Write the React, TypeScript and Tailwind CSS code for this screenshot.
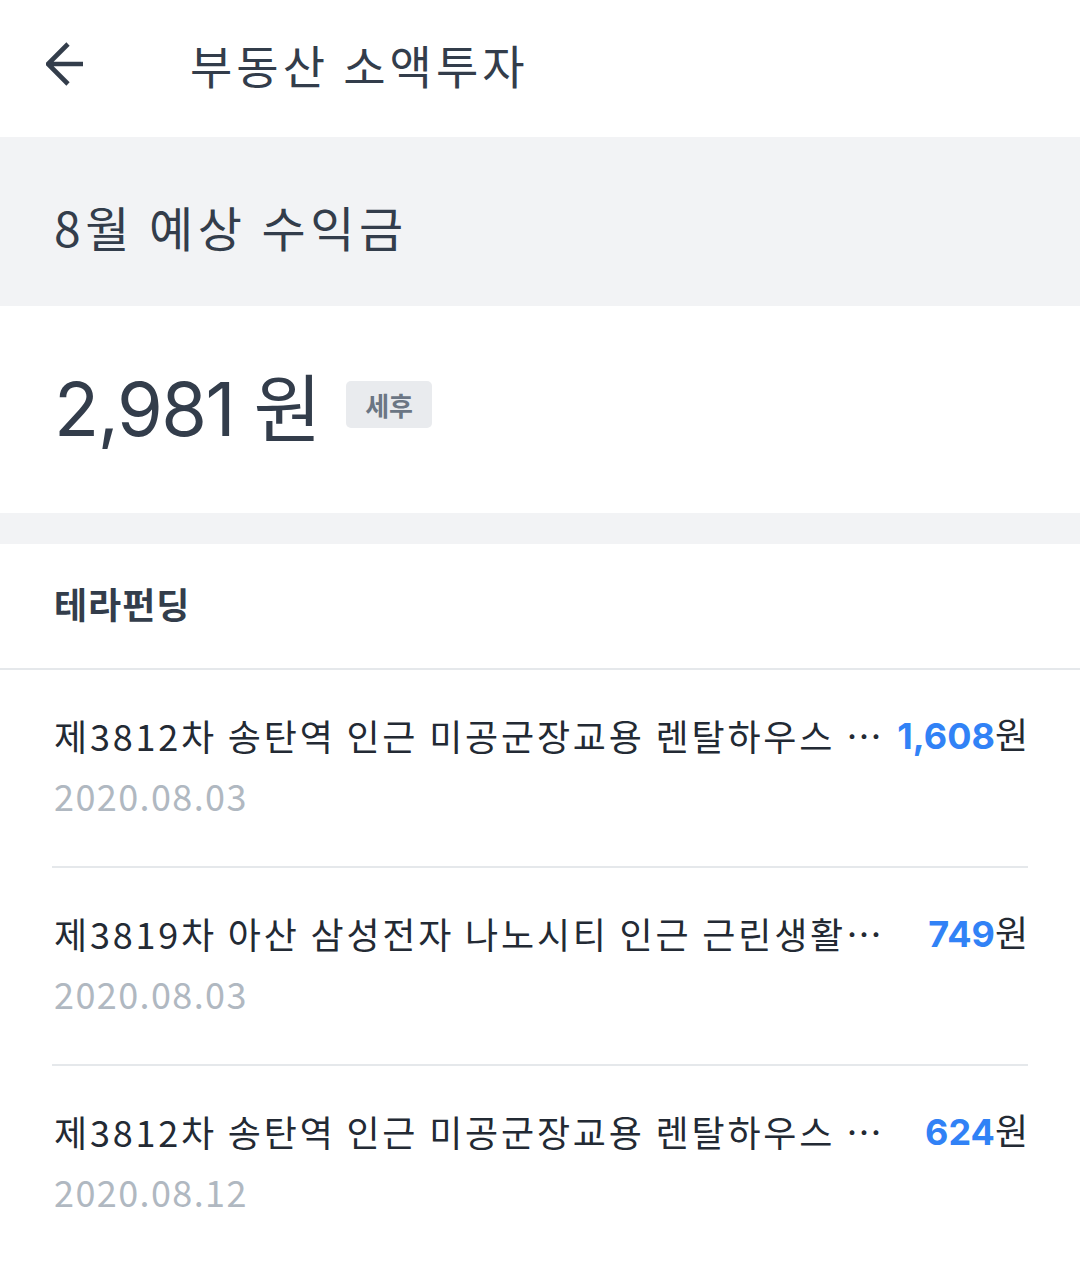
import React from "react";

const rows = [
  { title: "제3812차 송탄역 인근 미공군장교용 렌탈하우스 …", amount: "1,608", date: "2020.08.03" },
  { title: "제3819차 아산 삼성전자 나노시티 인근 근린생활…", amount: "749", date: "2020.08.03" },
  { title: "제3812차 송탄역 인근 미공군장교용 렌탈하우스 …", amount: "624", date: "2020.08.12" },
];

const kr = { fontFamily: "'Noto Sans CJK KR', sans-serif" };

export default function App() {
  return (
    <div
      className="w-[1080px] min-h-[1280px] bg-white text-[#333d4b]"
      style={{ fontFamily: "Inter, 'Noto Sans CJK KR', sans-serif" }}
    >
      {/* Header */}
      <div className="h-[137px] flex items-center pb-[10px]">
        <div className="w-[190px] pl-[46px] flex items-center">
          <svg width="42" height="46" viewBox="0 0 42 46" fill="none">
            <path d="M22 3 L2 23 L22 43 M2 23 H37" stroke="#333d4b" strokeWidth="4.6" strokeLinejoin="miter" />
          </svg>
        </div>
        <div className="text-[46px] leading-[56px] tracking-[4px]" style={kr}>
          부동산 소액투자
        </div>
      </div>

      {/* Month band */}
      <div className="h-[169px] bg-[#f2f3f5] pl-[54px] pt-[61px]">
        <div className="text-[48px] leading-[56px] tracking-[4.5px]" style={kr}>
          8월 예상 수익금
        </div>
      </div>

      {/* Amount */}
      <div className="h-[207px] flex items-center pl-[54px] pb-[6px]">
        <div className="text-[74px] leading-[90px] font-normal tracking-[-1.5px]">
          2,981 <span style={kr}>원</span>
        </div>
        <div
          className="ml-[26px] mt-[-4px] w-[86px] h-[47px] rounded-[5px] bg-[#e9ebee] flex items-center justify-center text-[26px] font-bold text-[#6b7684]"
          style={kr}
        >
          세후
        </div>
      </div>

      <div className="h-[31px] bg-[#f2f3f5]" />

      {/* Section title */}
      <div className="pl-[54px] pt-[35px] pb-[41px] border-b-[2px] border-[#e5e8eb]">
        <div className="text-[36px] leading-[48px] font-bold text-[#333d4b] tracking-[1px]" style={kr}>
          테라펀딩
        </div>
      </div>

      {/* List */}
      <div className="px-[52px]">
        {rows.map((r, i) => (
          <div key={i} className={i < rows.length - 1 ? "border-b-[2px] border-[#e5e8eb]" : ""}>
            <div className="pt-[39px] pb-[49px] pl-[2px]">
              <div className="flex items-center">
                <div
                  className="flex-1 min-w-0 whitespace-nowrap text-[36px] leading-[48px] text-[#232a34] tracking-[2.8px]"
                  style={kr}
                >
                  {r.title}
                </div>
                <div className="shrink-0 ml-[6px] text-[36px] leading-[48px] whitespace-nowrap">
                  <span className="font-bold text-[#3182f6]">{r.amount}</span>
                  <span className="text-[#232a34]" style={kr}>원</span>
                </div>
              </div>
              <div
                className="mt-[13px] text-[36px] leading-[44px] text-[#b0b8c1] tracking-[1.4px]"
                style={kr}
              >
                {r.date}
              </div>
            </div>
          </div>
        ))}
      </div>
    </div>
  );
}
